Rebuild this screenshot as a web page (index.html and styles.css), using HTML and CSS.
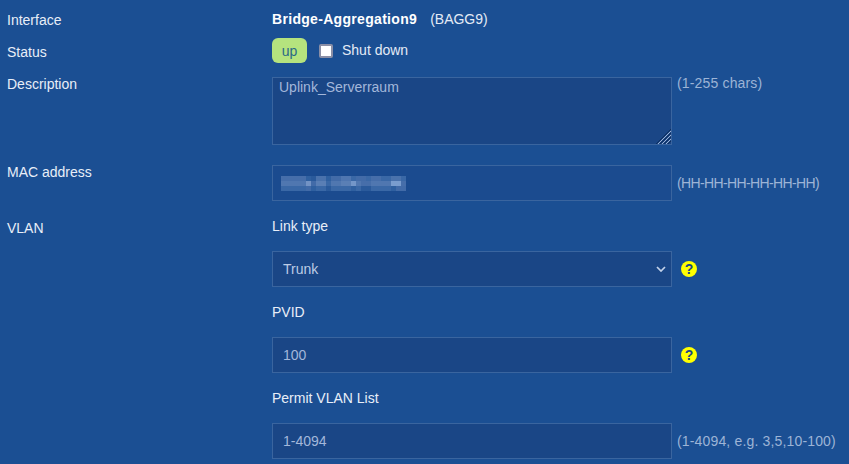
FILE: index.html
```html
<!DOCTYPE html>
<html lang="en">
<head>
<meta charset="utf-8">
<title>Interface</title>
<link rel="stylesheet" href="styles.css">
</head>
<body>
<main class="form">
  <div class="row row-iface">
    <div class="label">Interface</div>
    <div class="value iface"><strong>Bridge-Aggregation9</strong><span class="abbr">(BAGG9)</span></div>
  </div>
  <div class="row row-status">
    <div class="label">Status</div>
    <div class="value status">
      <span class="badge">up</span>
      <label class="check"><input type="checkbox"><span class="check-text">Shut down</span></label>
    </div>
  </div>
  <div class="row row-desc">
    <div class="label">Description</div>
    <div class="value field-line top">
      <div class="area-wrap">
        <textarea class="field area">Uplink_Serverraum</textarea>
        <svg class="grip" width="15" height="15" viewBox="0 0 15 15" aria-hidden="true">
          <path d="M0 15L15 0M4 15L15 4M8 15l7-7M12 15l3-3" fill="none" stroke="#0f2f5f" stroke-width="1"/>
          <path d="M2 15L15 2M6 15l9-9M10 15l5-5" fill="none" stroke="#9fb3d3" stroke-width="1"/>
        </svg>
      </div>
      <span class="hint hint-chars">(1-255 chars)</span>
    </div>
  </div>
  <div class="row row-mac">
    <div class="label">MAC address</div>
    <div class="value field-line">
      <div class="field mac">
        <svg class="mosaic" width="125" height="15" viewBox="0 0 25 3" shape-rendering="crispEdges" aria-hidden="true">
          <rect x="0" y="0" width="5" height="1" fill="#466eaa"/>
          <rect x="5" y="0" width="1" height="1" fill="#2f60a0"/>
          <rect x="6" y="0" width="1" height="1" fill="#2a5a9b"/>
          <rect x="7" y="0" width="2" height="1" fill="#4a72ac"/>
          <rect x="9" y="0" width="1" height="1" fill="#2f60a0"/>
          <rect x="10" y="0" width="2" height="1" fill="#426bA8"/>
          <rect x="12" y="0" width="2" height="1" fill="#4f76b0"/>
          <rect x="14" y="0" width="1" height="1" fill="#3a68a6"/>
          <rect x="15" y="0" width="2" height="1" fill="#426ba8"/>
          <rect x="17" y="0" width="1" height="1" fill="#3a68a6"/>
          <rect x="18" y="0" width="2" height="1" fill="#466eaa"/>
          <rect x="20" y="0" width="2" height="1" fill="#3a68a6"/>
          <rect x="22" y="0" width="2" height="1" fill="#4a72ac"/>
          <rect x="24" y="0" width="1" height="1" fill="#3a68a6"/>
          <rect x="0" y="1" width="5" height="1" fill="#5077b0"/>
          <rect x="5" y="1" width="1" height="1" fill="#7393c4"/>
          <rect x="6" y="1" width="1" height="1" fill="#426ba8"/>
          <rect x="7" y="1" width="2" height="1" fill="#5a7fb5"/>
          <rect x="9" y="1" width="1" height="1" fill="#3a68a6"/>
          <rect x="10" y="1" width="2" height="1" fill="#5077b0"/>
          <rect x="12" y="1" width="2" height="1" fill="#5a7fb5"/>
          <rect x="14" y="1" width="1" height="1" fill="#7396c8"/>
          <rect x="15" y="1" width="1" height="1" fill="#5077b0"/>
          <rect x="16" y="1" width="2" height="1" fill="#466eaa"/>
          <rect x="18" y="1" width="4" height="1" fill="#5077b0"/>
          <rect x="22" y="1" width="2" height="1" fill="#7a9dce"/>
          <rect x="24" y="1" width="1" height="1" fill="#466eaa"/>
          <rect x="0" y="2" width="5" height="1" fill="#3a68a6"/>
          <rect x="5" y="2" width="1" height="1" fill="#426ba8"/>
          <rect x="6" y="2" width="1" height="1" fill="#2f60a0"/>
          <rect x="7" y="2" width="2" height="1" fill="#3a68a6"/>
          <rect x="9" y="2" width="1" height="1" fill="#2a5a9b"/>
          <rect x="10" y="2" width="4" height="1" fill="#3a68a6"/>
          <rect x="14" y="2" width="1" height="1" fill="#2f60a0"/>
          <rect x="15" y="2" width="1" height="1" fill="#3a68a6"/>
          <rect x="16" y="2" width="2" height="1" fill="#2a5a9b"/>
          <rect x="18" y="2" width="4" height="1" fill="#3a68a6"/>
          <rect x="22" y="2" width="1" height="1" fill="#2f60a0"/>
          <rect x="23" y="2" width="2" height="1" fill="#426ba8"/>
        </svg>
      </div>
      <span class="hint hint-mac">(HH-HH-HH-HH-HH-HH)</span>
    </div>
  </div>
  <div class="row row-vlan">
    <div class="label">VLAN</div>
    <div class="value stack">
      <div class="sub">Link type</div>
      <div class="field-line">
        <div class="field select">
          <span>Trunk</span>
          <svg width="10" height="6" viewBox="0 0 10 6" aria-hidden="true"><path d="M1 1l4 4 4-4" fill="none" stroke="#c3d2ea" stroke-width="1.7"/></svg>
        </div>
        <span class="help">?</span>
      </div>
      <div class="sub">PVID</div>
      <div class="field-line">
        <div class="field box">100</div>
        <span class="help">?</span>
      </div>
      <div class="sub">Permit VLAN List</div>
      <div class="field-line">
        <div class="field box">1-4094</div>
        <span class="hint hint-list">(1-4094, e.g. 3,5,10-100)</span>
      </div>
    </div>
  </div>
</main>
</body>
</html>
```
FILE: styles.css
```css
* { box-sizing: border-box; }
html, body { margin: 0; height: 100%; overflow: hidden; }
body {
  background: #1b4f93;
  color: #e4ebf6;
  font: 14px/16px "Liberation Sans", Arial, sans-serif;
}
.form { padding: 12px 0 0 7px; }
.row { display: grid; grid-template-columns: 265px 1fr; }
.label { color: #e8eef8; }
.row-iface { height: 32px; }
.row-iface .value { margin-top: -1px; }
.iface strong { color: #fff; font-weight: 700; letter-spacing: .31px; }
.abbr { margin-left: 13px; }
.row-status { height: 33px; }
.status { display: flex; align-items: center; height: 25px; margin-top: -6px; }
.badge {
  width: 35px; height: 25px; border-radius: 6px;
  background: #b5e37e; color: #2a6a86;
  display: flex; align-items: center; justify-content: center;
}
.check { display: flex; align-items: center; margin-left: 12px; }
.check input {
  appearance: none;
  width: 14px; height: 14px; margin: 0 9px 0 0;
  background: #fff; border: 2px solid #8b8fa6; border-radius: 2px;
}
.check-text { margin-top: -2px; }
.row-desc, .row-mac, .row-vlan { align-items: start; }
.row-desc .label, .row-mac .label, .row-vlan .label { margin-top: -1px; }
.row-desc { height: 88px; }
.field-line { display: flex; align-items: center; }
.field-line.top { align-items: flex-start; }
.area-wrap { position: relative; width: 400px; height: 68px; }
.field {
  width: 400px; height: 36px;
  border: 1px solid #3a659f;
  color: #a3b7da;
  font: 14px/16px "Liberation Sans", Arial, sans-serif;
  flex: none;
}
.area {
  height: 68px; display: block; padding: 1px 6px; margin: 0;
  background: #1a4686; resize: none; outline: none; overflow: hidden;
}
.grip { position: absolute; right: 1px; bottom: 1px; }
.hint { color: #9db4d6; margin-left: 5px; white-space: nowrap; }
.hint-chars { margin-top: -2px; letter-spacing: .16px; }
.hint-mac { letter-spacing: -.63px; }
.hint-list { letter-spacing: .16px; }
.row-mac { height: 56px; }
.mac { display: flex; align-items: center; padding-left: 8px; background: #1b4b8f; }
.stack { display: flex; flex-direction: column; gap: 17px; margin-top: -3px; }
.sub { height: 16px; color: #e8eef8; }
.select, .box { background: #1a4686; display: flex; align-items: center; padding: 0 10px; }
.select { justify-content: space-between; padding-right: 5px; color: #bccbe5; }
.help {
  width: 16px; height: 16px; margin-left: 9px; border-radius: 50%;
  background: #ffff00; color: #1a4686;
  font: 700 14px/16px "Liberation Sans", Arial, sans-serif; text-align: center;
  flex: none;
}
```
